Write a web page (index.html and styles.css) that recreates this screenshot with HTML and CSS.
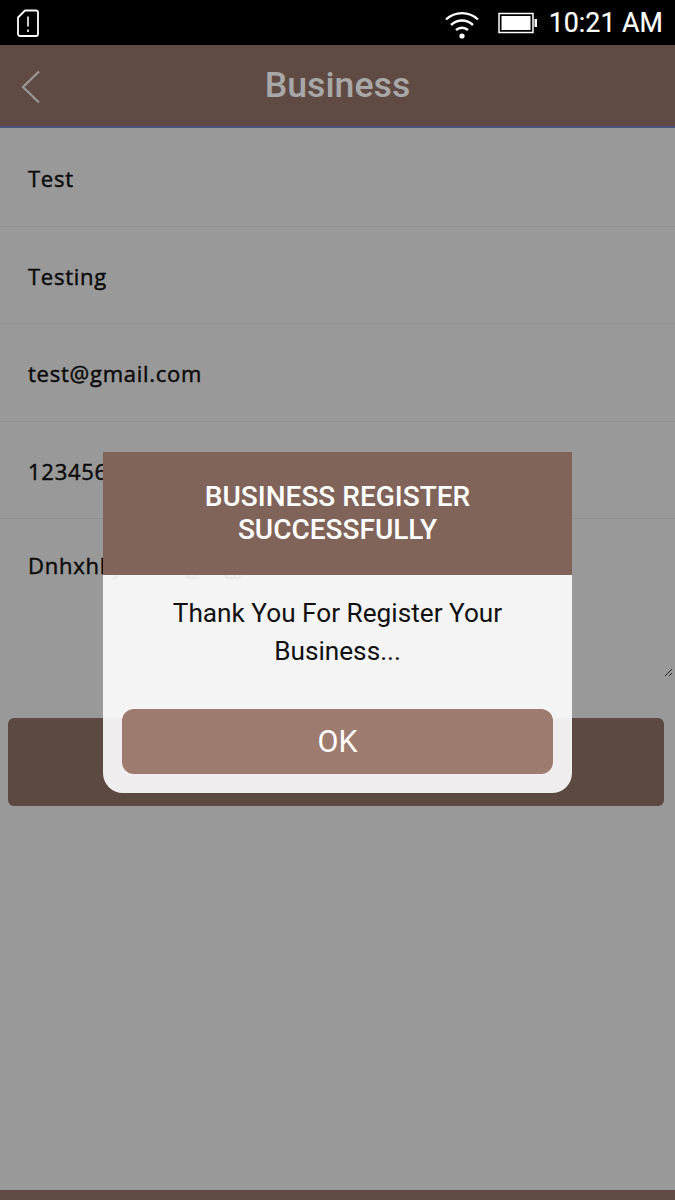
FILE: index.html
```html
<!DOCTYPE html>
<html lang="en">
<head>
<meta charset="utf-8">
<title>Business</title>
<link rel="stylesheet" href="styles.css">
</head>
<body>
<div class="app">
  <div class="statusbar">
    <svg class="sim" width="24" height="30" viewBox="0 0 24 30"><path d="M9 2.500H20a2 2 0 0 1 2 2V26a2 2 0 0 1-2 2H4a2 2 0 0 1-2-2V9.500Z" fill="none" stroke="#fff" stroke-width="1.800" stroke-linejoin="round"/><path d="M12 8.500V18.500M12 21.500V24" stroke="#fff" stroke-width="1.600"/></svg>
    <div class="status-right">
      <svg class="wifi" width="36" height="30" viewBox="0 0 36 30"><path d="M2 10.500C11 2 25 2 34 10.500M7 16C13.500 10 22.500 10 29 16M12 21C15.500 18 20.500 18 24 21" fill="none" stroke="#fff" stroke-width="2.400"/><circle cx="18" cy="27" r="2.600" fill="#fff"/></svg>
      <svg class="battery" width="40" height="22" viewBox="0 0 40 22"><rect x="1" y="1.500" width="34" height="19" fill="none" stroke="#fff" stroke-width="1.500"/><rect x="3.500" y="4" width="29" height="14" fill="#fff"/><rect x="36.500" y="7" width="2.500" height="8" fill="#fff"/></svg>
      <span class="clock">10:21 AM</span>
    </div>
  </div>
  <header class="appbar">
    <svg class="back" width="20" height="36" viewBox="0 0 20 36"><path d="M18 2.500 2 18 18 33.500" fill="none" stroke="#fff" stroke-width="2.200"/></svg>
    <h1 class="appbar-title">Business</h1>
  </header>
  <main class="form">
    <div class="row">Test</div>
    <div class="row">Testing</div>
    <div class="row">test@gmail.com</div>
    <div class="row">1234567890</div>
    <div class="row row-area">Dnhxhbjsndhxgshgj
      <svg class="grip" width="9" height="9" viewBox="0 0 9 9"><path d="M1 8 8 1M5 8 8 5" stroke="#444" stroke-width="1"/></svg>
    </div>
    <div class="submit">SUBMIT</div>
  </main>
  <footer class="bottombar"></footer>
  <div class="overlay"></div>
  <section class="dialog">
    <h2 class="dialog-title">BUSINESS REGISTER SUCCESSFULLY</h2>
    <div class="dialog-body">
      <p class="dialog-text">Thank You For Register Your Business...</p>
      <div class="ok">OK</div>
    </div>
  </section>
</div>
</body>
</html>
```
FILE: styles.css
```css
* { box-sizing: border-box; margin: 0; padding: 0; }
html, body { width: 675px; height: 1200px; overflow: hidden; background: #fff; }
.app { position: relative; width: 675px; height: 1200px; display: flex; flex-direction: column; font-family: "Open Sans", sans-serif; }
.statusbar { position: relative; z-index: 3; height: 45px; flex: none; background: #000; display: flex; align-items: center; justify-content: space-between; padding: 0 12px 0 16px; color: #fff; }
.status-right { display: flex; align-items: center; }
.wifi { margin: 2px 18px 0 0; }
.battery { margin: 1px 11px 0 0; }
.clock { font-family: Roboto, sans-serif; font-size: 26.800px; line-height: 45px; padding-top: 2px; -webkit-text-stroke: .2px #fff; }
.appbar { height: 83px; flex: none; background: #9f7d71; border-bottom: 2px solid #7e8dd2; display: flex; align-items: center; justify-content: center; position: relative; padding-bottom: 2px; }
.back { position: absolute; left: 21px; top: 24px; }
.appbar-title { position: relative; z-index: 2; font-family: Roboto, sans-serif; font-size: 35.700px; font-weight: 500; color: #a8a8a8; }
.form { flex: 1; display: flex; flex-direction: column; padding-top: 1px; }
.row { height: 97.500px; flex: none; border-bottom: 1px solid #f0f0f0; padding: 2px 28px 0; display: flex; align-items: center; font-size: 22px; font-weight: 400; letter-spacing: .74px; -webkit-text-stroke: .45px #111; color: #111; }
.row-area { position: relative; height: 159px; align-items: flex-start; padding-top: 31px; border-bottom: 0; }
.grip { position: absolute; right: 2px; bottom: 1px; }
.submit { margin: 40px 11px 0 8px; height: 88px; background: #9a7a6f; border-radius: 6px; display: flex; align-items: center; justify-content: center; color: #fff; font-family: Roboto, sans-serif; font-size: 28px; }
.bottombar { height: 10px; flex: none; background: #9f7d71; }
.overlay { position: absolute; left: 0; right: 0; top: 45px; bottom: 0; background: rgba(0,0,0,.4); z-index: 1; }
.dialog { position: absolute; z-index: 2; left: 103px; top: 452px; width: 469px; height: 341px; border-radius: 0 0 20px 20px; overflow: hidden; display: flex; flex-direction: column; }
.dialog-title { height: 123px; flex: none; background: #806459; color: #fff; font-family: Roboto, sans-serif; font-size: 28px; line-height: 33px; font-weight: 500; text-align: center; padding: 28px 50px 0; }
.dialog-body { flex: 1; background: rgba(252,252,252,.92); padding: 19px; display: flex; flex-direction: column; }
.dialog-text { font-family: Roboto, sans-serif; font-size: 26.200px; line-height: 38px; color: #111; text-align: center; padding: 0 40px; }
.ok { margin-top: auto; height: 65px; background: #9e7b6f; border-radius: 12px; display: flex; align-items: center; justify-content: center; color: #fff; font-family: Roboto, sans-serif; font-size: 30.500px; }
```
